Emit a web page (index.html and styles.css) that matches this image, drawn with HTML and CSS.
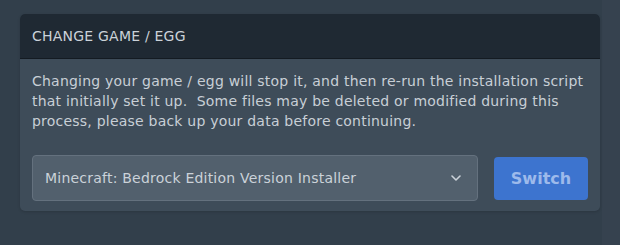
FILE: index.html
```html
<!DOCTYPE html>
<html>
<head>
<meta charset="utf-8">
<link rel="stylesheet" href="styles.css">
</head>
<body>
<div class="page">
  <section class="card">
    <header class="card-header">CHANGE GAME / EGG</header>
    <div class="card-body">
      <p class="desc">Changing your game / egg will stop it, and then re-run the installation script that initially set it up.&nbsp; Some files may be deleted or modified during this process, please back up your data before continuing.</p>
      <div class="row">
        <div class="select">
          <span class="select-text">Minecraft: Bedrock Edition Version Installer</span>
          <svg class="chev" width="10" height="6" viewBox="0 0 10 6"><path d="M1 1 L5 5 L9 1" fill="none" stroke="#cbd2d9" stroke-width="1.6" stroke-linecap="round" stroke-linejoin="round"/></svg>
        </div>
        <button class="btn">Switch</button>
      </div>
    </div>
  </section>
</div>
</body>
</html>
```

FILE: styles.css
```css
html, body {
  margin: 0;
  padding: 0;
}
body {
  width: 620px;
  height: 245px;
  background: linear-gradient(to right, #323f4b 0, #323f4b 602px, #36424f 602px, #36424f 620px);
  font-family: "DejaVu Sans", sans-serif;
  color: #cbd2d9;
  overflow: hidden;
}
.page {
  padding: 14px 20px 0 20px;
}
.card {
  width: 580px;
  background: #3e4c59;
  border-radius: 5px;
  overflow: hidden;
  box-shadow: 0 1px 3px rgba(0,0,0,0.15);
}
.card-header {
  background: #1f2933;
  box-sizing: border-box;
  padding: 0 12px;
  display: flex;
  align-items: center;
  font-size: 14px;
  letter-spacing: 0.22px;
  color: #cbd2d9;
  border-bottom: 1px solid #141b22;
  height: 45px;
}
.card-body {
  padding: 12px 12px 10px 12px;
}
.desc {
  margin: 0;
  font-size: 14px;
  letter-spacing: 0.22px;
  line-height: 20px;
  color: #c8cfd6;
}
.row {
  display: flex;
  align-items: center;
  gap: 16px;
  margin-top: 24px;
}
.select {
  flex: 0 0 446px;
  height: 46px;
  box-sizing: border-box;
  background: #52606d;
  border: 1px solid #64717e;
  border-radius: 4px;
  display: flex;
  align-items: center;
  justify-content: space-between;
  padding: 0 16px 0 12px;
  font-size: 14px;
  letter-spacing: 0.22px;
  color: #cbd2d9;
}
.chev {
  display: block;
}
.btn {
  width: 94px;
  height: 43px;
  border: none;
  border-radius: 4px;
  background: #3d74cf;
  color: #9dbaeb;
  font-family: "DejaVu Sans", sans-serif;
  font-weight: bold;
  font-size: 16px;
  padding: 0;
}
```
